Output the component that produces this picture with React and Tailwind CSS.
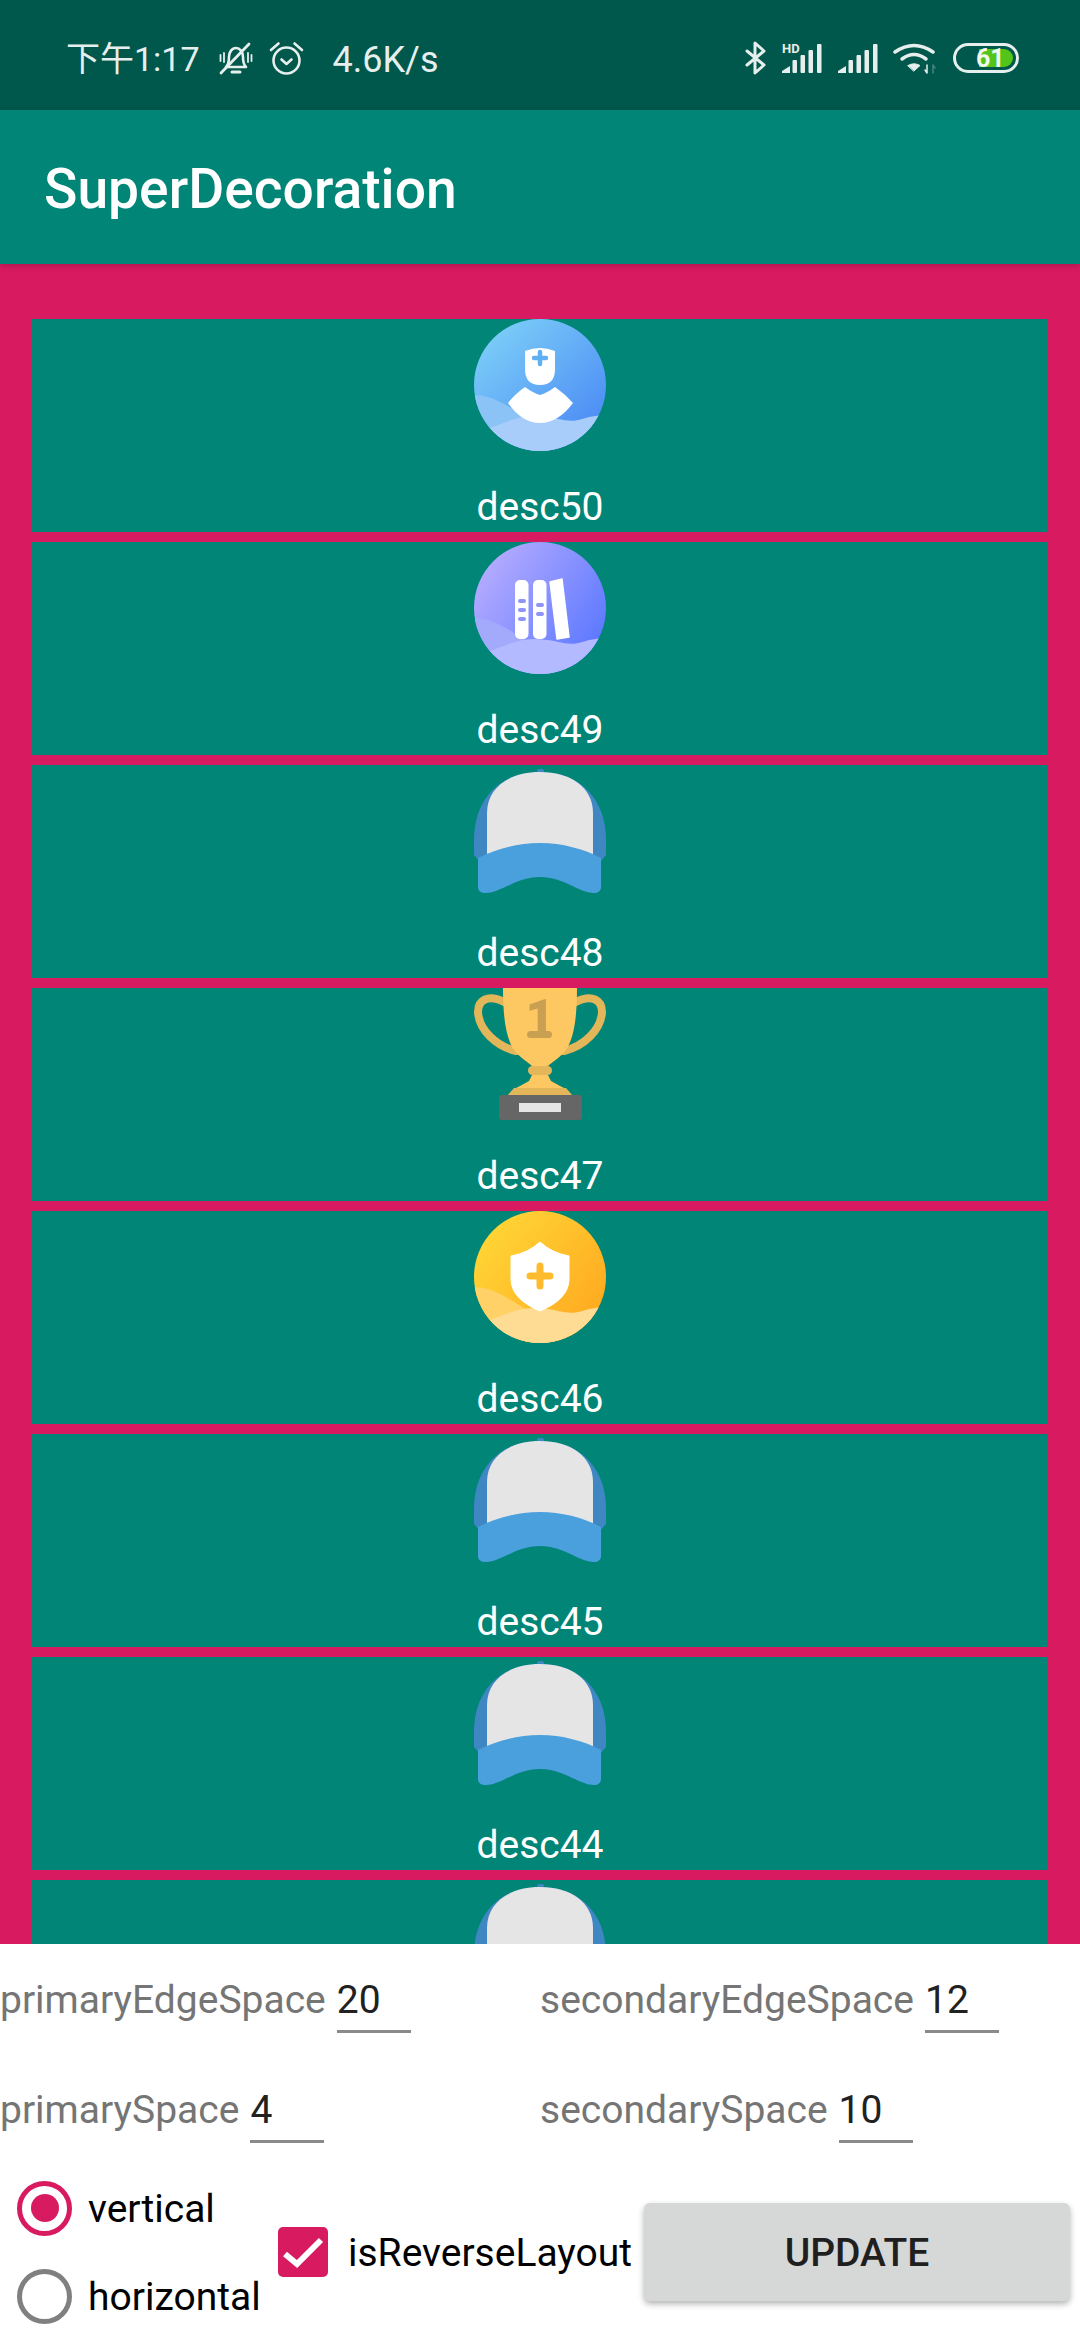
import React from 'react';

const BellOff = () => (
  <svg width="34" height="33" viewBox="0 0 34 33" fill="none" stroke="#e6efed" strokeWidth="2.6">
    <path d="M7 25c2-2 3-5 3-10 0-5 3-9 7-9s7 4 7 9c0 5 1 8 3 10z" strokeLinejoin="round" />
    <path d="M2 31 30 2" strokeWidth="2.8" strokeLinecap="round" />
    <path d="M13 30h8" strokeWidth="3" strokeLinecap="round" />
    <path d="M1.5 13v6M5 11v9M29 11v9M32.5 13v6" strokeWidth="1.8" strokeLinecap="round" />
  </svg>
);

const Alarm = () => (
  <svg width="35" height="34" viewBox="0 0 35 34" fill="none" stroke="#e6efed" strokeWidth="2.6" strokeLinecap="round" strokeLinejoin="round">
    <circle cx="17.5" cy="19.5" r="13" />
    <path d="M12.5 18.5l5 4.5 5-4.5" />
    <path d="M2 9l7.5-6.5M33 9l-7.500-6.500" />
  </svg>
);

const Bluetooth = () => (
  <svg width="21" height="34" viewBox="0 0 21 34" fill="none" stroke="#e6efed" strokeWidth="3" strokeLinejoin="round" strokeLinecap="round">
    <path d="M2 10 19 24 10 32V2l9 8L2 24" />
  </svg>
);

const Signal = ({ hd }) => (
  <svg width="40" height="30" viewBox="0 0 40 30" fill="#e6efed" className="overflow-visible">
    <path d="M0 30v-2l8-5v7z" />
    <rect x="10.500" y="17" width="4.500" height="13" rx="1" />
    <rect x="18.500" y="12" width="4.500" height="18" rx="1" />
    <rect x="26.500" y="7" width="4.500" height="23" rx="1" />
    <rect x="35" y="1" width="4.500" height="29" rx="1" />
    {hd && (
      <text x="0" y="10" fontSize="13" fontWeight="700" fontFamily="Roboto, sans-serif" fill="#e6efed">HD</text>
    )}
  </svg>
);

const Wifi = () => (
  <svg width="44" height="31" viewBox="0 0 44 31" fill="none" stroke="#e6efed" strokeWidth="3.500" strokeLinecap="round">
    <path d="M2 9Q21-4 40 9" />
    <path d="M9 16Q21 7 33 16" />
    <path d="M15 22.500Q21 19 27 22.500L21 28z" fill="#e6efed" strokeWidth="1" strokeLinejoin="round" />
    <path d="M34 22v8M32 27l2 3" strokeWidth="1.500" />
    <path d="M40 30v-8M42 25l-2-3" strokeWidth="1.500" opacity="0.3" />
  </svg>
);

const Battery = () => (
  <svg width="66" height="30" viewBox="0 0 66 30">
    <rect x="1.500" y="1.500" width="63" height="27" rx="13.500" fill="none" stroke="#e6efed" strokeWidth="3" />
    <path d="M26 6h25a9 9 0 0 1 0 18H26z" fill="#52c41a" />
    <text x="23" y="24" fontSize="25" fontWeight="700" fontFamily="Roboto, sans-serif" fill="#f2f7f2">61</text>
  </svg>
);

// 背景波浪，三个圆形图标共用
const Waves = ({ back, front }) => (
  <>
    <path d="M0 76C20 76 34 88 50 97c16 9 32 11 50 10 12-1 22-4 32-6v31H0z" fill={back} />
    <path d="M0 112c22-1 38-16 62-15 24 1 32 8 46 3 10-3 18-4 24-4v36H0z" fill={front} />
  </>
);

const DoctorIcon = () => (
  <svg width="132" height="132" viewBox="0 0 132 132">
    <defs>
      <linearGradient id="docBg" x1="0.150" y1="0" x2="0.900" y2="0.800">
        <stop offset="0" stopColor="#7ed0f8" />
        <stop offset="1" stopColor="#4d8ef5" />
      </linearGradient>
      <clipPath id="docClip"><circle cx="66" cy="66" r="66" /></clipPath>
    </defs>
    <g clipPath="url(#docClip)">
      <rect width="132" height="132" fill="url(#docBg)" />
      <Waves back="#8cc3f7" front="#a9cdfa" />
      <path d="M51 32Q66 26 81 32V50Q81 66 66 66 51 66 51 50Z" fill="#fff" />
      <path d="M66 33v12M60 39h12" stroke="#5fb0f3" strokeWidth="4.500" strokeLinecap="round" />
      <path d="M34 84Q41 75 51 68Q59 74 66 76 73 74 81 68 91 75 99 84 84 104 66 104 48 104 34 84Z" fill="#fff" />
    </g>
  </svg>
);

const BooksIcon = () => (
  <svg width="132" height="132" viewBox="0 0 132 132">
    <defs>
      <linearGradient id="bookBg" x1="0.100" y1="0.100" x2="1" y2="0.700">
        <stop offset="0" stopColor="#b6acff" />
        <stop offset="1" stopColor="#5c78ff" />
      </linearGradient>
      <clipPath id="bookClip"><circle cx="66" cy="66" r="66" /></clipPath>
    </defs>
    <g clipPath="url(#bookClip)">
      <rect width="132" height="132" fill="url(#bookBg)" />
      <Waves back="#a3a9fb" front="#b3baff" />
      <rect x="41" y="38" width="13.500" height="59" rx="5" fill="#fff" />
      <rect x="59" y="38" width="13.500" height="59" rx="5" fill="#fff" />
      <path d="M76 40 88 37 95 95 83 97z" fill="#fff" stroke="#fff" strokeWidth="1.500" strokeLinejoin="round" />
      <g fill="#8f95f8">
        <rect x="44" y="57" width="8" height="4" rx="2" />
        <rect x="44" y="66" width="8" height="4" rx="2" />
        <rect x="44" y="75" width="8" height="4" rx="2" />
        <rect x="62" y="61" width="8" height="4" rx="2" />
        <rect x="62" y="70" width="8" height="4" rx="2" />
      </g>
    </g>
  </svg>
);

const ShieldIcon = () => (
  <svg width="132" height="132" viewBox="0 0 132 132">
    <defs>
      <linearGradient id="shieldBg" x1="0.100" y1="0.100" x2="1" y2="0.800">
        <stop offset="0" stopColor="#ffd636" />
        <stop offset="1" stopColor="#ffa81f" />
      </linearGradient>
      <clipPath id="shieldClip"><circle cx="66" cy="66" r="66" /></clipPath>
    </defs>
    <g clipPath="url(#shieldClip)">
      <rect width="132" height="132" fill="url(#shieldBg)" />
      <Waves back="#ffd166" front="#ffdc93" />
      <path d="M66 31Q78 42 95 45V68Q95 88 66 100 37 88 37 68V45Q54 42 66 31Z" fill="#fff" stroke="#fff" strokeLinejoin="round" />
      <path d="M66 55v20M56 65h20" stroke="#fdbb2d" strokeWidth="7" strokeLinecap="round" />
    </g>
  </svg>
);

const HatIcon = () => (
  <svg width="132" height="132" viewBox="0 0 132 132">
    <rect x="63" y="4" width="7" height="5" rx="2" fill="#3f87c3" />
    <path d="M0 75C0 35 25 7 66 7s66 28 66 68v15l-6 7H6l-6-7z" fill="#3f87c3" />
    <path d="M13 92V48C13 22 36 7 66 7s53 15 53 41v44z" fill="#e5e5e5" />
    <path d="M4 93C22 84 44 78 66 78s44 6 61 15v29c0 4-3 6-7 6-15 0-30-16-54-16S27 128 12 128c-5 0-8-2-8-6z" fill="#4a9fdd" />
  </svg>
);

const TrophyIcon = () => (
  <svg width="132" height="132" viewBox="0 0 132 132">
    <g fill="none" stroke="#e3b65a" strokeWidth="8" strokeLinecap="round">
      <path d="M30 14C14 6 4 12 4 24c1 18 18 34 38 39" />
      <path d="M102 14c16-8 26-2 26 10-1 18-18 34-38 39" />
    </g>
    <path d="M29 0H103C103 30 100 50 92 62 86 70 78 74 74 78H58C54 74 46 70 40 62 32 50 29 30 29 0Z" fill="#fdc862" />
    <text x="66" y="47" textAnchor="middle" fontSize="50" fontWeight="900" fontFamily="Roboto, sans-serif" fill="#c9a052">1</text>
    <rect x="53" y="43" width="25" height="7" rx="3.500" fill="#c9a052" />
    <rect x="54" y="78" width="24" height="9" rx="4.500" fill="#e3b65a" />
    <path d="M58 87h16l3 6 9 5 6 3H40l6-3 9-5z" fill="#fdc862" />
    <path d="M40 100h52l7 8H33z" fill="#e3b65a" />
    <rect x="25" y="107" width="83" height="25" rx="3" fill="#666666" />
    <rect x="45" y="115" width="42" height="9" fill="#e5e5e5" />
  </svg>
);

// 最后一项只露出图标，文字被底部面板挡住
const ITEMS = [
  { desc: 'desc50', Icon: DoctorIcon },
  { desc: 'desc49', Icon: BooksIcon },
  { desc: 'desc48', Icon: HatIcon },
  { desc: 'desc47', Icon: TrophyIcon },
  { desc: 'desc46', Icon: ShieldIcon },
  { desc: 'desc45', Icon: HatIcon },
  { desc: 'desc44', Icon: HatIcon },
  { desc: '', Icon: HatIcon },
];

function Field({ label, value }) {
  return (
    <div className="flex items-start pt-[34px]">
      <span className="text-[#757575] leading-[45px]">{label}</span>
      <div className="ml-[11px] h-[55px] w-[74px] border-b-[3px] border-[#8a8a8a] leading-[45px] text-[#212121]">{value}</div>
    </div>
  );
}

function Radio({ label, checked }) {
  return (
    <div className="flex h-[88px] items-center pl-[17px]">
      <div className={`flex h-[55px] w-[55px] items-center justify-center rounded-full border-[5.5px] ${checked ? 'border-[#d81b60]' : 'border-[#808080]'}`}>
        {checked && <div className="h-[28px] w-[28px] rounded-full bg-[#d81b60]" />}
      </div>
      <span className="ml-[16px] pt-[2px] leading-[45px] text-black">{label}</span>
    </div>
  );
}

export default function App() {
  return (
    <div className="flex h-[2340px] w-[1080px] flex-col overflow-hidden bg-white font-['Roboto','Noto_Sans_CJK_SC',sans-serif] text-[39px]">
      {/* status bar */}
      <div className="flex h-[110px] shrink-0 items-center justify-between bg-[#00574b] pt-[6px] pr-[61px] pl-[66px] text-[#e6efed]">
        <div className="flex items-center">
          <span className="pt-[3px] text-[34px]">下午1:17</span>
          <div className="ml-[19px]"><BellOff /></div>
          <div className="ml-[16px]"><Alarm /></div>
          <span className="ml-[29px] pt-[3px] text-[36px]">4.6K/s</span>
        </div>
        <div className="flex items-center">
          <Bluetooth />
          <div className="ml-[16px]"><Signal hd /></div>
          <div className="ml-[16px]"><Signal /></div>
          <div className="ml-[15px]"><Wifi /></div>
          <div className="ml-[16px]"><Battery /></div>
        </div>
      </div>

      {/* app bar */}
      <div className="z-10 flex h-[154px] shrink-0 items-center bg-[#008577] pt-[4px] pl-[44px] text-[55.200px] font-medium text-white shadow-[0_2px_6px_rgba(0,0,0,0.2)]">
        SuperDecoration
      </div>

      {/* list */}
      <div className="flex min-h-0 flex-1 flex-col gap-[10px] overflow-hidden bg-[#d81b60] px-[32px] pt-[55px]">
        {ITEMS.map(({ desc, Icon }, idx) => (
          <div key={idx} className="flex h-[213px] shrink-0 flex-col items-center bg-[#008577] text-white">
            <Icon />
            {desc && <div className="mt-[34px] leading-[45px]">{desc}</div>}
          </div>
        ))}
      </div>

      {/* controls */}
      <div className="h-[396px] shrink-0 bg-white">
        <div className="grid h-[110px] grid-cols-2">
          <Field label="primaryEdgeSpace" value="20" />
          <Field label="secondaryEdgeSpace" value="12" />
        </div>
        <div className="grid h-[110px] grid-cols-2">
          <Field label="primarySpace" value="4" />
          <Field label="secondarySpace" value="10" />
        </div>
        <div className="flex h-[176px] items-center">
          <div className="w-[278px]">
            <Radio label="vertical" checked />
            <Radio label="horizontal" />
          </div>
          <div className="flex h-[50px] w-[50px] items-center justify-center rounded-[5px] bg-[#d81b60]">
            <svg width="50" height="50" viewBox="0 0 50 50" fill="none" stroke="#fff" strokeWidth="6">
              <path d="M7 27 19 37 43 13" />
            </svg>
          </div>
          <span className="ml-[20px] pt-[2px] leading-[45px] text-black">isReverseLayout</span>
          <button className="mr-[10px] ml-auto h-[98px] w-[426px] rounded-[6px] bg-[#d6d7d7] pt-[3px] font-medium text-[#1f1f1f] shadow-[0_3px_6px_rgba(0,0,0,0.3)]">
            UPDATE
          </button>
        </div>
      </div>
    </div>
  );
}
